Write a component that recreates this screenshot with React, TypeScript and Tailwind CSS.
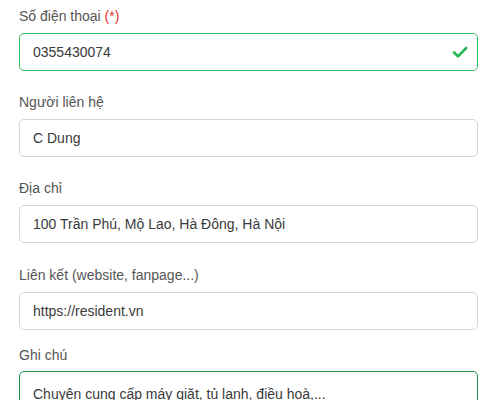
const font = { fontFamily: '"Liberation Sans", Arial, sans-serif' };

type FieldProps = {
  label: string;
  value: string;
  required?: boolean;
  valid?: boolean;
  className?: string;
};

const Field = ({ label, value, required, valid, className }: FieldProps) => {
  return (
    <div className={className}>
      <label className="block text-[14px] leading-[21px] text-[#555555] mb-1.5">
        {label}
        {required && <span className="text-[#e3342f]"> (*)</span>}
      </label>
      <div
        className={`relative h-[38px] rounded-[5px] border bg-white flex items-center pl-[13px] pr-9 text-[14px] text-[#3a3a3a] ${
          valid ? "border-[#2ec05c]" : "border-[#d5d5dc]"
        }`}
      >
        <span className="truncate">{value}</span>
        {valid && (
          <svg
            className="absolute right-[9px] top-1/2 -translate-y-1/2"
            width="16"
            height="14"
            viewBox="0 0 16 14"
            fill="none"
          >
            <path
              d="M2 7.5 L6 11.3 L14.2 3"
              stroke="#26b955"
              strokeWidth="2.6"
              strokeLinecap="round"
              strokeLinejoin="round"
            />
          </svg>
        )}
      </div>
    </div>
  );
};

export default function App() {
  return (
    <div className="w-[496px] h-[400px] overflow-hidden bg-white pl-[19px] pr-[18px] pt-[6px]" style={font}>
      <Field label="Số điện thoại" value="0355430074" required valid className="mb-[21px]" />
      <Field label="Người liên hệ" value="C Dung" className="mb-[21px]" />
      <Field label="Địa chỉ" value="100 Trần Phú, Mộ Lao, Hà Đông, Hà Nội" className="mb-[22px]" />
      <Field label="Liên kết (website, fanpage...)" value="https://resident.vn" className="mb-[15px]" />
      <div>
        <label className="block text-[14px] leading-[21px] text-[#555555] mb-[5px]">Ghi chú</label>
        <div className="h-[90px] rounded-[5px] border border-[#25894f] bg-white px-[13px] pt-[12px] text-[14px] leading-[21px] text-[#3a3a3a]">
          Chuyên cung cấp máy giặt, tủ lạnh, điều hoà,...
        </div>
      </div>
    </div>
  );
}
